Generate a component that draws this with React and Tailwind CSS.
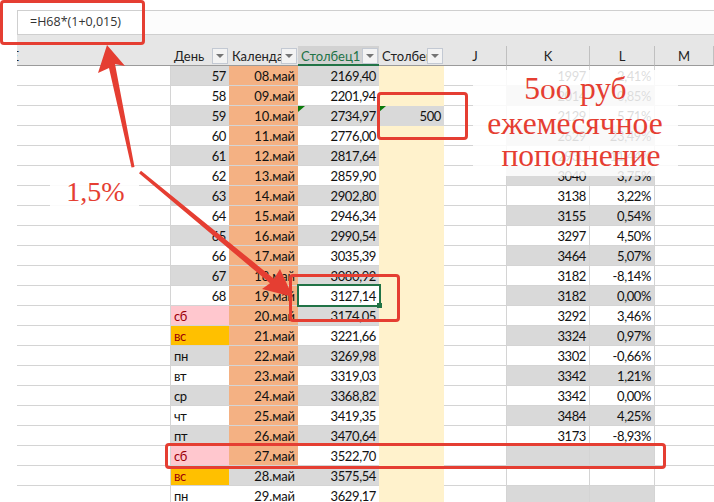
const H = ["2169,40","2201,94","2734,97","2776,00","2817,64","2859,90","2902,80","2946,34","2990,54","3035,39","3080,92","3127,14","3174,05","3221,66","3269,98","3319,03","3368,82","3419,35","3470,64","3522,70","3575,54","3629,17"];
const dayLabels = ["57","58","59","60","61","62","63","64","65","66","67","68","сб","вс","пн","вт","ср","чт","пт","сб","вс","пн"];
const K = ["1997","2014","2129","2629","2930","3040","3138","3155","3297","3464","3182","3182","3292","3324","3302","3342","3342","3484","3173","","",""];
const L = ["2,41%","0,85%","5,71%","23,49%","11,44%","3,75%","3,22%","0,54%","4,50%","5,07%","-8,14%","0,00%","3,46%","0,97%","-0,66%","1,21%","0,00%","4,25%","-8,93%","","",""];

const gridCols = "grid grid-cols-[17px_154px_58px_69px_81px_65px_63px_83px_65px_59px]";

function Filter() {
  return (
    <span className="absolute right-[1px] top-[2px] flex h-[16px] w-[16px] items-center justify-center border border-[#c3c9d3] bg-[#f3f3f3]">
      <span className="h-0 w-0 border-x-[4px] border-t-[4px] border-x-transparent border-t-[#757575]" />
    </span>
  );
}

function HeadCell({ children, filter, active, center }) {
  return (
    <div className={`relative h-[20px] overflow-hidden border-b border-[#9b9b9b] ${active ? "border-b-2 border-b-[#217346] bg-[#d2d2d2] text-[#217346]" : "bg-[#e6e6e6] text-[#222]"} ${center ? "border-r border-r-[#c0c0c0] text-center" : "pl-[3px]"} leading-[20px]`}>
      {children}
      {filter && <Filter />}
    </div>
  );
}

function Cell({ bg, text, children, left, line = true, className = "" }) {
  return (
    <div className={`h-[20px] ${line ? "border-b border-[#d4d4d4]" : ""} ${bg} ${text || "text-[#111]"} ${left ? "pl-[3px] text-left" : "pr-[3px] text-right"} leading-[21px] ${className}`}>
      {children}
    </div>
  );
}

function Row({ i }) {
  const even = i % 2 === 0;
  const band = even ? "bg-[#d9d9d9]" : "bg-white";
  const bandK = even ? "bg-white" : "bg-[#d9d9d9]";
  const isSat = i === 12 || i === 19;
  const isSun = i === 13 || i === 20;
  const dayBg = isSat ? "bg-[#ffc7ce]" : isSun ? "bg-[#ffc000]" : band;
  const dayText = isSat || isSun ? "text-[#9c0006]" : "text-[#111]";
  const dateBg = i <= 19 ? "bg-[#f4b183]" : band;
  return (
    <div className={gridCols}>
      <div className="h-[20px] bg-white" />
      <div className="h-[20px] border-b border-r border-[#d4d4d4] bg-white" />
      <Cell bg={dayBg} text={dayText} left={i >= 12} className="tracking-[-0.4px]">{dayLabels[i]}</Cell>
      <Cell bg={dateBg} className="tracking-[-0.1px]">{`${String(i + 8).padStart(2, "0")}.май`}</Cell>
      <Cell bg={band} className="relative tracking-[-0.4px]">
        {H[i]}
        {i === 2 && <span className="absolute left-0 top-0 h-0 w-0 border-r-[7px] border-t-[6px] border-r-transparent border-t-[#0b7a0b]" />}
      </Cell>
      <Cell bg={i === 2 ? "bg-[#d9d9d9]" : "bg-[#fff2cc]"} line={false} className="relative tracking-[-0.4px]">
        {i === 2 ? "500" : ""}
        {i === 2 && <span className="absolute left-0 top-0 h-0 w-0 border-r-[7px] border-t-[6px] border-r-transparent border-t-[#0b7a0b]" />}
      </Cell>
      <div className="h-[20px] border-b border-r border-[#d4d4d4] bg-white" />
      <Cell bg={bandK} className="border-r border-r-[#d4d4d4] tracking-[-0.4px]">{K[i]}</Cell>
      <Cell bg={bandK} className="border-r border-r-[#d4d4d4] tracking-[-0.4px]">{L[i]}</Cell>
      <div className="h-[20px] border-b border-[#d4d4d4] bg-white" />
    </div>
  );
}

function RedBox({ className }) {
  return <div className={`absolute rounded-[4px] border-[3px] border-[#e53e32] ${className}`} />;
}

export default function App() {
  return (
    <div className="relative h-[502px] w-[714px] overflow-hidden bg-white font-['Lato',sans-serif] text-[13px]">
      <div className="pl-[17px] pt-[10px]">
        <div className="flex h-[25px] border-y border-[#cfcfcf] bg-[#fcfcfc]">
          <div className="flex h-full w-[127px] items-center border-x border-[#cfcfcf] bg-white pl-[12px] font-['Open_Sans',sans-serif] text-[12.5px] text-[#333]">=H68*(1+0,015)</div>
        </div>
        <div className="h-[11px] bg-[#e6e6e6]" />
      </div>
      <div className={gridCols}>
        <div className="h-[20px] bg-white" />
        <HeadCell><span className="-ml-[9px] text-[#222]">Ξ</span></HeadCell>
        <HeadCell filter>День</HeadCell>
        <HeadCell filter>Календарь</HeadCell>
        <HeadCell filter active>Столбец1</HeadCell>
        <HeadCell filter>Столбец2</HeadCell>
        <HeadCell center>J</HeadCell>
        <HeadCell center>K</HeadCell>
        <HeadCell center>L</HeadCell>
        <HeadCell center>M</HeadCell>
      </div>
      {H.map((_, i) => <Row key={i} i={i} />)}

      <div className="absolute left-[473px] top-[70px] flex h-[106px] w-[205px] flex-col items-center bg-white/85 pt-[3px] font-['Liberation_Serif',serif] text-[31.5px] leading-[32px] text-[#e53e32]">
        <span>5<span className="mr-[11px] inline-block origin-left scale-x-[1.5] text-[21px]">00</span> руб</span>
        <span className="-ml-[1px]">ежемесячное</span>
        <span className="ml-[11px]">пополнение</span>
      </div>
      <div className="absolute left-[50px] top-[175px] flex h-[34px] w-[89px] items-center justify-center bg-white/90 pl-[2px] font-['Liberation_Serif',serif] text-[28px] text-[#e53e32]">1,5%</div>

      <RedBox className="left-0 top-0 h-[45px] w-[145px]" />
      <RedBox className="left-[377px] top-[92px] h-[48px] w-[91px]" />
      <RedBox className="left-[289px] top-[274px] h-[48px] w-[111px]" />
      <RedBox className="left-[165px] top-[443px] h-[26px] w-[501px]" />

      <div className="absolute left-[297px] top-[284px] h-[23px] w-[84px] border-2 border-[#217346]" />
      <div className="absolute left-[377px] top-[303px] h-[5px] w-[5px] bg-[#217346]" />

      <svg className="absolute left-0 top-0" width="714" height="502" viewBox="0 0 714 502">
        <polygon points="107,45 125,66 115,64 134.5,167 131.5,167.5 109,68 98,73" fill="#e53e32" />
        <polygon points="141,170.8 274,278.7 280,269 293,297 262,289 270,283.3 139,173.2" fill="#e53e32" />
      </svg>
    </div>
  );
}
